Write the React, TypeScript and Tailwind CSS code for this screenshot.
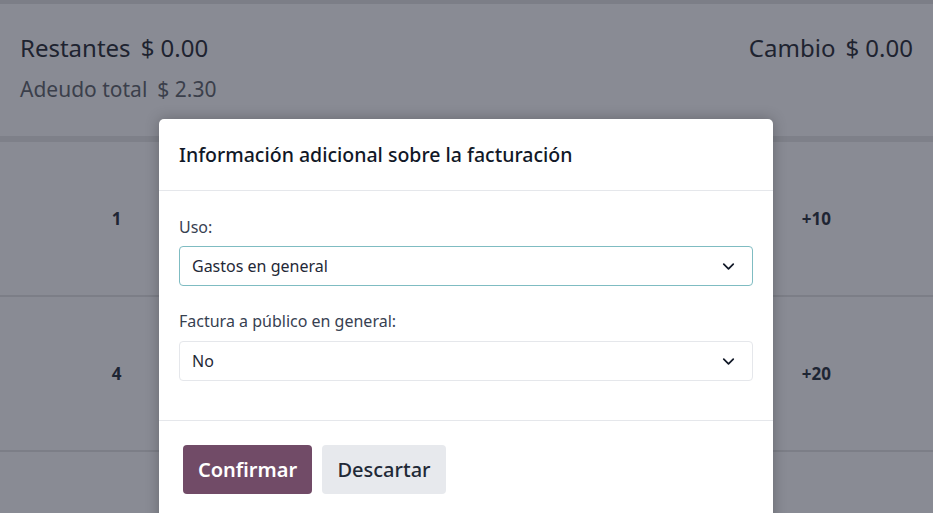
import { ChevronDown } from 'lucide-react';

const keys = ['1', '2', '3', '+10', '4', '5', '6', '+20'];

function SelectBox({ value, focused }: { value: string; focused?: boolean }) {
  return (
    <div
      className={
        'flex items-center justify-between h-[40px] rounded-[4px] border pl-[12px] pr-[14px] text-[16px] text-[#1f2937] ' +
        (focused ? 'border-[#7fbcc2]' : 'border-[#e5e7eb]')
      }
    >
      <span>{value}</span>
      <ChevronDown size={19} strokeWidth={2.2} className="text-[#111827]" />
    </div>
  );
}

export default function App() {
  return (
    <div
      className="relative w-[933px] h-[513px] overflow-hidden bg-[#898b94]"
      style={{ fontFamily: '"Noto Sans", "Open Sans", sans-serif' }}
    >
      <div className="h-[4px] bg-[#7c7e87]" />

      {/* resumen de pago */}
      <div className="h-[132px] px-[20px] pt-[26px]">
        <div className="flex justify-between text-[24px] text-[#1e2330]">
          <div className="flex gap-[10px]">
            <span>Restantes</span>
            <span>$ 0.00</span>
          </div>
          <div className="flex gap-[10px]">
            <span>Cambio</span>
            <span>$ 0.00</span>
          </div>
        </div>
        <div className="flex gap-[10px] mt-[8px] text-[21px] text-[#3b3f4b]">
          <span>Adeudo total</span>
          <span>$ 2.30</span>
        </div>
      </div>

      <div className="h-[6px] bg-[#7e8089]" />

      {/* teclado */}
      <div className="grid grid-cols-4">
        {keys.map((k) => (
          <div
            key={k}
            className="h-[155px] flex items-center justify-center border-b-[2px] border-[#7c7e87] text-[17px] font-bold text-[#1e2533]"
          >
            {k}
          </div>
        ))}
        <div className="h-[80px]" />
      </div>

      {/* modal */}
      <div className="absolute left-[159px] top-[119px] w-[614px] h-[420px] bg-white rounded-t-[5px] shadow-[0_0_14px_rgba(0,0,0,0.25)]">
        <div className="h-[72px] flex items-center px-[20px] border-b border-[#e5e7eb]">
          <h4 className="text-[19.5px] font-medium text-[#111827]">Información adicional sobre la facturación</h4>
        </div>
        <div className="px-[20px] pt-[24px] pb-[39px] border-b border-[#e5e7eb]">
          <div className="text-[16px] text-[#374151] mb-[7px]">Uso:</div>
          <SelectBox value="Gastos en general" focused />
          <div className="text-[16px] text-[#374151] mt-[23px] mb-[8px]">Factura a público en general:</div>
          <SelectBox value="No" />
        </div>
        <div className="flex gap-[10px] px-[24px] pt-[24px]">
          <button className="h-[49px] w-[129px] rounded-[4px] bg-[#714b67] text-white text-[20px] font-semibold">
            Confirmar
          </button>
          <button className="h-[49px] w-[124px] rounded-[4px] bg-[#e7e9ed] text-[#1f2937] text-[20px] font-medium">
            Descartar
          </button>
        </div>
      </div>
    </div>
  );
}
